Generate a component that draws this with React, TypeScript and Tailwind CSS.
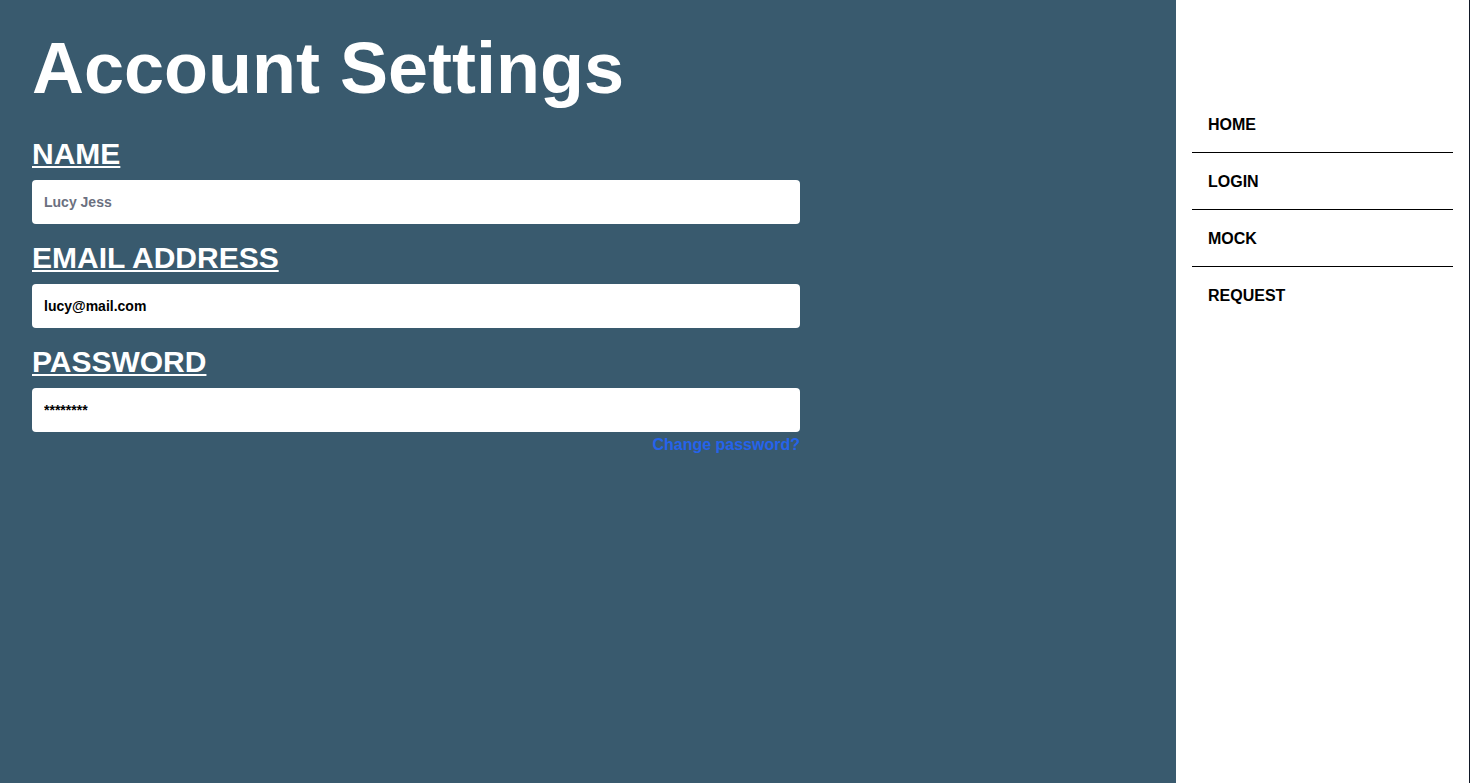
import React from 'react';

const NAV_ITEMS = ['HOME', 'LOGIN', 'MOCK', 'REQUEST'];

const Field: React.FC<{
  label: string;
  placeholder?: string;
  value?: string;
  children?: React.ReactNode;
}> = ({ label, placeholder, value, children }) => {
  return (
    <div className="mb-4 flex flex-col">
      <label className="mb-2 text-[30px] leading-[36px] font-bold text-white underline decoration-2 underline-offset-2">
        {label}
      </label>
      <input
        type="text"
        readOnly
        placeholder={placeholder}
        defaultValue={value}
        className="h-11 w-full rounded bg-white px-3 text-[14px] font-bold text-black outline-none placeholder:text-[#6b7080]"
      />
      {children}
    </div>
  );
};

const App: React.FC = () => {
  return (
    <div className="flex h-screen w-full font-['Liberation_Sans',Arial,sans-serif]">
      {/* Main content */}
      <main className="flex-1 bg-[#395a6e] p-8">
        <h1 className="text-[72px] leading-none font-bold text-white">Account Settings</h1>

        <form className="mt-8 w-[768px]">
          <Field label="NAME" placeholder="Lucy Jess" />
          <Field label="EMAIL ADDRESS" value="lucy@mail.com" />
          <Field label="PASSWORD" value="********">
            <a href="#" className="mt-px self-end text-base font-bold text-[#2563eb]">
              Change password?
            </a>
          </Field>
        </form>
      </main>

      {/* Sidebar */}
      <aside className="w-[294px] border-r border-[#111827] bg-white px-4 pt-24">
        <nav className="flex flex-col">
          {NAV_ITEMS.map((item, index) => (
            <a
              key={item}
              href="#"
              className={
                index < NAV_ITEMS.length - 1
                  ? 'border-b border-black px-4 pt-[17px] pb-[15px] text-base font-bold text-black'
                  : 'px-4 pt-[17px] pb-[15px] text-base font-bold text-black'
              }
            >
              {item}
            </a>
          ))}
        </nav>
      </aside>
    </div>
  );
};

export default App;
